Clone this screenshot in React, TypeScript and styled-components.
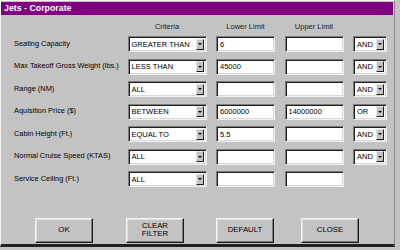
import React from "react";
import styled, { createGlobalStyle } from "styled-components";

const Global = createGlobalStyle`
  html, body { margin: 0; padding: 0; background: #c3c3c3; }
  body { font-family: "Liberation Sans", Arial, sans-serif; }
`;

const Window = styled.div`
  width: 395px;
  height: 247px;
  box-sizing: border-box;
  background: #c3c3c3;
  border-left: 1px solid #f4f4f4;
  border-top: 1px solid #f4f4f4;
  border-right: 1px solid #8a8a8a;
  border-bottom: 3px solid #202020;
  display: flex;
  flex-direction: column;
`;

const TitleBar = styled.div`
  height: 13px;
  margin: 1px 1px 0 0;
  background: #800080;
  color: #ffffff;
  font-weight: bold;
  font-size: 8.8px;
  line-height: 13px;
  padding-left: 3px;
  white-space: nowrap;
`;

const Form = styled.div`
  display: grid;
  grid-template-columns: 105px 79px 59px 59px 34px;
  column-gap: 9.5px;
  grid-auto-rows: 22.5px;
  grid-template-rows: 12px;
  padding: 6px 0 0 12px;
  align-items: center;
`;

const HeaderCell = styled.div<{ $col: number }>`
  grid-column: ${(p) => p.$col};
  font-size: 7.5px;
  color: #202020;
  text-align: center;
  margin-bottom: 1px;
`;

const Spacer = styled.div`
  grid-column: 1;
  height: 2px;
`;

const Label = styled.div`
  grid-column: 1;
  font-size: 7.4px;
  color: #000;
  white-space: nowrap;
  padding-left: 1px;
  margin-top: -2px;
`;

const Sunken = styled.div`
  box-sizing: border-box;
  height: 16px;
  background: #ffffff;
  border-top: 1px solid #7c7c7c;
  border-left: 1px solid #7c7c7c;
  border-right: 1px solid #f2f2f2;
  border-bottom: 1px solid #f2f2f2;
  box-shadow: inset 1px 1px 0 #202020, inset -1px -1px 0 #d8d8d8;
  font-size: 7.5px;
  color: #000;
  display: flex;
  align-items: center;
  padding-left: 3px;
  white-space: nowrap;
  overflow: hidden;
`;

const SelectBox = styled(Sunken)`
  justify-content: space-between;
  padding-right: 2px;
`;

const ArrowButton = styled.div`
  flex: none;
  box-sizing: border-box;
  width: 8px;
  height: 11px;
  background: #c3c3c3;
  border-top: 1px solid #e8e8e8;
  border-left: 1px solid #e8e8e8;
  border-right: 1px solid #202020;
  border-bottom: 1px solid #202020;
  display: flex;
  align-items: center;
  justify-content: center;
`;

const Triangle = styled.div`
  width: 0;
  height: 0;
  border-left: 2px solid transparent;
  border-right: 2px solid transparent;
  border-top: 2px solid #000;
`;

const ButtonRow = styled.div`
  display: flex;
  padding: 27px 0 0 0;
`;

const Button = styled.div<{ $offset: number }>`
  box-sizing: border-box;
  margin-left: ${(p) => p.$offset}px;
  width: 58px;
  height: 25px;
  background: #c3c3c3;
  border-top: 1px solid #f4f4f4;
  border-left: 1px solid #f4f4f4;
  border-right: 1px solid #1a1a1a;
  border-bottom: 1px solid #1a1a1a;
  box-shadow: inset -1px -1px 0 #7c7c7c, inset 1px 1px 0 #dedede;
  font-size: 7.8px;
  line-height: 8.5px;
  color: #000;
  display: flex;
  align-items: center;
  justify-content: center;
  text-align: center;
`;

type Row = {
  label: string;
  crit: string;
  lo: string;
  hi: string;
  op: string | null;
};

const rows: Row[] = [
  { label: "Seating Capacity", crit: "GREATER THAN", lo: "6", hi: "", op: "AND" },
  { label: "Max Takeoff Gross Weight (lbs.)", crit: "LESS THAN", lo: "45000", hi: "", op: "AND" },
  { label: "Range (NM)", crit: "ALL", lo: "", hi: "", op: "AND" },
  { label: "Aquisition Price ($)", crit: "BETWEEN", lo: "6000000", hi: "14000000", op: "OR" },
  { label: "Cabin Height (Ft.)", crit: "EQUAL TO", lo: "5.5", hi: "", op: "AND" },
  { label: "Normal Cruise Speed (KTAS)", crit: "ALL", lo: "", hi: "", op: "AND" },
  { label: "Service Ceiling (Ft.)", crit: "ALL", lo: "", hi: "", op: null },
];

const Select: React.FC<{ value: string }> = ({ value }) => (
  <SelectBox>
    <span>{value}</span>
    <ArrowButton>
      <Triangle />
    </ArrowButton>
  </SelectBox>
);

export default function App() {
  return (
    <>
      <Global />
      <Window>
        <TitleBar>Jets - Corporate</TitleBar>
        <Form>
          <Spacer />
          <HeaderCell $col={2}>Criteria</HeaderCell>
          <HeaderCell $col={3}>Lower Limit</HeaderCell>
          <HeaderCell $col={4}>Upper Limit</HeaderCell>
          {rows.map((r) => (
            <React.Fragment key={r.label}>
              <Label>{r.label}</Label>
              <Select value={r.crit} />
              <Sunken>{r.lo}</Sunken>
              <Sunken>{r.hi}</Sunken>
              {r.op ? <Select value={r.op} /> : <div />}
            </React.Fragment>
          ))}
        </Form>
        <ButtonRow>
          <Button $offset={34}>OK</Button>
          <Button $offset={33}>
            CLEAR
            <br />
            FILTER
          </Button>
          <Button $offset={32}>DEFAULT</Button>
          <Button $offset={27}>CLOSE</Button>
        </ButtonRow>
      </Window>
    </>
  );
}
